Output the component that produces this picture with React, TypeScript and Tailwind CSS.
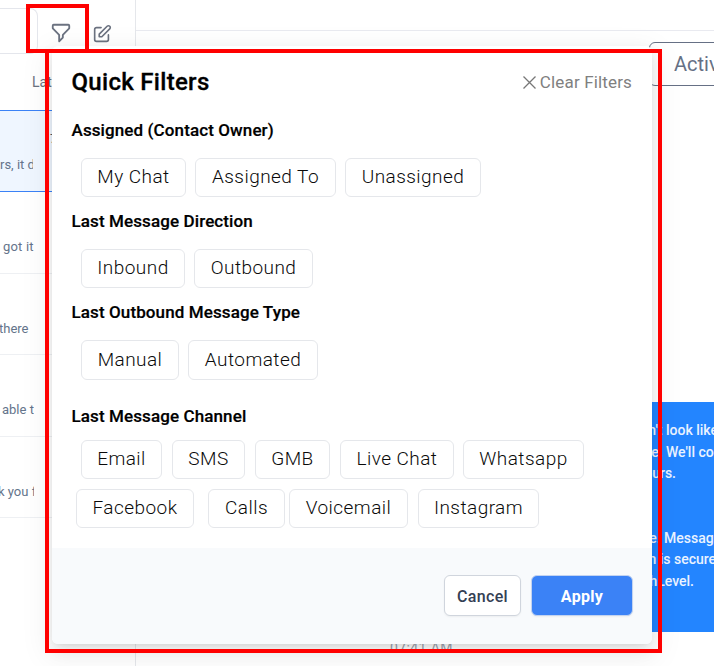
import React from "react";

type ChipSpec = { label: string; box: string };

function Chip({ label, box }: ChipSpec) {
  return (
    <button
      className={`flex shrink-0 items-center justify-center whitespace-nowrap rounded-md border border-[#e5e7eb] bg-white text-[19px] font-light tracking-[0.45px] text-[#0a0a0a] ${box}`}
    >
      {label}
    </button>
  );
}

function Heading({ children, className }: { children: React.ReactNode; className: string }) {
  return (
    <h3 className={`whitespace-nowrap text-[17px] leading-6 font-medium tracking-[0.11px] text-black [-webkit-text-stroke:0.2px_black] ${className}`}>{children}</h3>
  );
}

const previews = [
  { text: "got it", style: "h-[82px] indent-[3px] tracking-[0.2px]" },
  { text: "there", style: "h-[81px] -indent-px" },
  { text: "able t", style: "h-[82px] indent-[2px]" },
  { text: "k you f", style: "h-[81px] -indent-[2px]" },
];

function Sidebar() {
  return (
    <aside className="flex w-[136px] shrink-0 flex-col border-r border-[#e5e7eb]">
      <div className="flex h-[63px] shrink-0 items-start">
        <div className="mt-2 h-[46px] w-[38px] rounded-tr-lg rounded-br-lg border border-l-0 border-[#e4e6ec]" />
        <svg className="mt-[22px] ml-[12px] h-[22px] w-[22px] shrink-0" viewBox="0 0 24 24" fill="none" stroke="#6b7280" strokeWidth="2" strokeLinejoin="round" strokeLinecap="round">
          <path d="M3 4a1 1 0 011-1h16a1 1 0 011 1v2.586a1 1 0 01-.293.707l-6.414 6.414a1 1 0 00-.293.707V17l-4 4v-6.586a1 1 0 00-.293-.707L3.293 7.293A1 1 0 013 6.586V4z" />
        </svg>
        <svg className="mt-[23px] ml-[19px] h-[22px] w-[22px] shrink-0" viewBox="0 0 24 24" fill="none" stroke="#6b7280" strokeWidth="1.8" strokeLinejoin="round" strokeLinecap="round">
          <path d="M11 5H6a2 2 0 00-2 2v11a2 2 0 002 2h11a2 2 0 002-2v-5m-1.414-9.414a2 2 0 112.828 2.828L11.828 15H9v-2.828l8.586-8.586z" />
        </svg>
      </div>
      <div className="h-[47px] shrink-0 pt-[9px] pl-8 text-[14px] leading-5 text-[#6b7280]">Latest</div>
      <div className="flex h-[82px] shrink-0 flex-col border-y border-[#3b82f6] bg-[#eff6ff]">
        <div className="mt-[20px] ml-[50px] text-[12px] leading-4 text-[#4b5563]">7:41</div>
        <div className="mt-[8px] w-[33px] overflow-hidden text-[13px] leading-5 whitespace-nowrap text-[#64748b]">rs, it d</div>
      </div>
      {previews.map(({ text, style }) => (
        <div key={text} className={`shrink-0 border-b border-[#eef0f3] pt-[45px] ${style}`}>
          <div className="w-[34px] overflow-hidden text-[13px] leading-5 whitespace-nowrap text-[#64748b]">{text}</div>
        </div>
      ))}
    </aside>
  );
}

function BubbleLine({ before, after, split }: { before: string; after: string; split: string }) {
  return (
    <div className="flex h-[21.5px]">
      <span className={`flex shrink-0 justify-end whitespace-pre ${split}`}>{before}</span>
      <span className="whitespace-pre">{after}</span>
    </div>
  );
}

function Conversation() {
  return (
    <main className="flex min-w-0 flex-1 flex-col">
      <div className="h-[31px] shrink-0 border-b border-[#e9eaf0]" />
      <div className="mt-[11px] ml-[513px] h-11 w-[120px] shrink-0 rounded-md border border-[#667085] pt-[7px] pl-6 text-[20px] leading-7 text-[#667085]">
        Active
      </div>
      <div className="mt-[316px] ml-[440px] h-[230px] w-[300px] shrink-0 bg-[#2385ff] pt-[18px] text-[14px] leading-[21.5px] font-medium whitespace-nowrap text-[#eaf3ff]">
        <BubbleLine before="doesn't " after="look like" split="w-[90px]" />
        <BubbleLine before="here. " after="We'll co" split="w-[90px]" />
        <BubbleLine before="hours." after="" split="w-[100px]" />
        <div className="h-[43px]" />
        <BubbleLine before="here. " after="Messag" split="w-[88px]" />
        <BubbleLine before="tion is " after="secure" split="w-[98px]" />
        <BubbleLine before="HighLevel." after="" split="w-[118px]" />
      </div>
      <div className="mt-[6px] ml-[254px] text-[14px] leading-5 tracking-[0.4px] text-[#9ca3af]">07:41 AM</div>
    </main>
  );
}

function Dialog() {
  return (
    <section className="absolute top-[46px] left-[52px] flex h-[598px] w-[600px] flex-col overflow-hidden rounded-md bg-white shadow-[0_3px_6px_-4px_rgba(0,0,0,.12),0_6px_16px_0_rgba(0,0,0,.08),0_9px_28px_8px_rgba(0,0,0,.05)]">
      <div className="flex h-[502px] shrink-0 flex-col">
        <header className="mt-5 flex h-8 items-center justify-between pr-[20px] pl-[19.5px]">
          <h2 className="text-[24px] leading-8 font-medium tracking-[0.3px] text-black [-webkit-text-stroke:0.3px_black]">Quick Filters</h2>
          <button className="flex items-center gap-1 pt-px text-[17px] tracking-[0.15px] text-[#808080]">
            <svg className="h-[13px] w-[13px]" viewBox="0 0 13 13" stroke="#777" strokeWidth="1.3">
              <path d="M.5.5l12 12M12.5.5l-12 12" />
            </svg>
            Clear Filters
          </button>
        </header>
        <Heading className="mt-[20px] ml-[19.5px]">Assigned (Contact Owner)</Heading>
        <div className="mt-4 ml-[29px] flex h-[39px] gap-[9px]">
          <Chip label="My Chat" box="w-[105px]" />
          <Chip label="Assigned To" box="w-[141px]" />
          <Chip label="Unassigned" box="w-[136px]" />
        </div>
        <Heading className="mt-3 ml-[19.5px]">Last Message Direction</Heading>
        <div className="mt-4 ml-[29px] flex h-[39px] gap-[9px]">
          <Chip label="Inbound" box="w-[104px]" />
          <Chip label="Outbound" box="w-[119px]" />
        </div>
        <Heading className="mt-3 ml-[19.5px]">Last Outbound Message Type</Heading>
        <div className="mt-4 ml-[29px] flex h-10 gap-[9px]">
          <Chip label="Manual" box="w-[98px]" />
          <Chip label="Automated" box="w-[130px]" />
        </div>
        <Heading className="mt-6 ml-[19.5px]">Last Message Channel</Heading>
        <div className="mt-3 ml-[29px] flex h-[39px] gap-[10px]">
          <Chip label="Email" box="w-[81px]" />
          <Chip label="SMS" box="w-[73px]" />
          <Chip label="GMB" box="w-[75px]" />
          <Chip label="Live Chat" box="w-[114px]" />
          <Chip label="Whatsapp" box="w-[121px] -ml-px" />
        </div>
        <div className="mt-[10px] ml-6 flex h-[39px]">
          <Chip label="Facebook" box="w-[118px]" />
          <Chip label="Calls" box="w-[77px] ml-[14px]" />
          <Chip label="Voicemail" box="w-[119px] ml-1" />
          <Chip label="Instagram" box="w-[121px] ml-[10px]" />
        </div>
      </div>
      <footer className="flex flex-1 items-start justify-end gap-[10px] bg-[#f8fafc] pt-[27px] pr-[19px]">
        <button className="h-[41px] w-[77px] rounded-md border border-[#d0d5dd] bg-white pt-[2px] text-[16px] font-medium tracking-[0.3px] text-[#344054] shadow-xs">Cancel</button>
        <button className="h-[41px] w-[102px] rounded-md border border-[#c3d3f0] bg-[#3b82f6] pt-[2px] text-[16px] font-bold tracking-[0.3px] text-white shadow-xs">Apply</button>
      </footer>
    </section>
  );
}

export default function App() {
  return (
    <div className="relative flex h-[666px] w-[714px] overflow-hidden bg-white font-['Roboto',sans-serif]">
      <Sidebar />
      <Conversation />
      <Dialog />
      <div className="absolute top-[4px] left-[26px] h-[49px] w-[63px] border-4 border-[#ff0000]" />
      <div className="absolute top-[49px] left-[45px] h-[604px] w-[617px] border-4 border-[#ff0000]" />
    </div>
  );
}
